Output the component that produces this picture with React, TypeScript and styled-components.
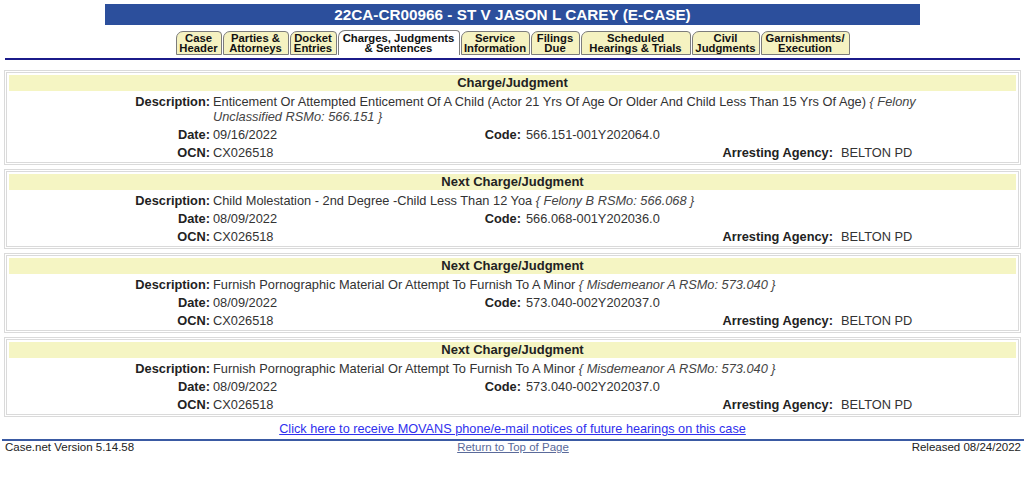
import React from 'react';
import styled, { createGlobalStyle } from 'styled-components';

interface Charge {
  title: string;
  description: string;
  classification: string;
  date: string;
  code: string;
  ocn: string;
  agency: string;
}

const charges: Charge[] = [
  {
    title: 'Charge/Judgment',
    description:
      'Enticement Or Attempted Enticement Of A Child (Actor 21 Yrs Of Age Or Older And Child Less Than 15 Yrs Of Age)',
    classification: '{ Felony Unclassified RSMo: 566.151 }',
    date: '09/16/2022',
    code: '566.151-001Y202064.0',
    ocn: 'CX026518',
    agency: 'BELTON PD',
  },
  {
    title: 'Next Charge/Judgment',
    description: 'Child Molestation - 2nd Degree -Child Less Than 12 Yoa',
    classification: '{ Felony B RSMo: 566.068 }',
    date: '08/09/2022',
    code: '566.068-001Y202036.0',
    ocn: 'CX026518',
    agency: 'BELTON PD',
  },
  {
    title: 'Next Charge/Judgment',
    description: 'Furnish Pornographic Material Or Attempt To Furnish To A Minor',
    classification: '{ Misdemeanor A RSMo: 573.040 }',
    date: '08/09/2022',
    code: '573.040-002Y202037.0',
    ocn: 'CX026518',
    agency: 'BELTON PD',
  },
  {
    title: 'Next Charge/Judgment',
    description: 'Furnish Pornographic Material Or Attempt To Furnish To A Minor',
    classification: '{ Misdemeanor A RSMo: 573.040 }',
    date: '08/09/2022',
    code: '573.040-002Y202037.0',
    ocn: 'CX026518',
    agency: 'BELTON PD',
  },
];

// tab labels, widths taken from the reference tab images
const tabs = [
  { lines: ['Case', 'Header'], width: 46 },
  { lines: ['Parties &', 'Attorneys'], width: 66 },
  { lines: ['Docket', 'Entries'], width: 47 },
  { lines: ['Charges, Judgments', '& Sentences'], width: 122, active: true },
  { lines: ['Service', 'Information'], width: 69 },
  { lines: ['Filings', 'Due'], width: 49 },
  { lines: ['Scheduled', 'Hearings & Trials'], width: 110 },
  { lines: ['Civil', 'Judgments'], width: 68 },
  { lines: ['Garnishments/', 'Execution'], width: 89 },
];

export default function App() {
  return (
    <>
      <GlobalStyle />
      <Page>
        <TitleBar>22CA-CR00966 - ST V JASON L CAREY (E-CASE)</TitleBar>
        <TabRow>
          {tabs.map((t) => (
            <Tab key={t.lines[0]} $width={t.width} $active={!!t.active}>
              {t.lines.map((l) => (
                <span key={l}>{l}</span>
              ))}
            </Tab>
          ))}
        </TabRow>
        <NavRule />

        <ChargeList>
          {charges.map((c, i) => (
            <Box key={i}>
              <Inner>
                <Header>{c.title}</Header>

                <Label $col={1}>Description:</Label>
                <Description>
                  {c.description} <Class>{c.classification}</Class>
                </Description>

                <Label $col={1}>Date:</Label>
                <Value $col={2}>{c.date}</Value>
                <Label $col={3} $pad={5}>Code:</Label>
                <Value $col={4}>{c.code}</Value>

                <Label $col={1}>OCN:</Label>
                <Value $col={2}>{c.ocn}</Value>
                <Label $col={5} $pad={8}>Arresting Agency:</Label>
                <Value $col={6}>{c.agency}</Value>
              </Inner>
            </Box>
          ))}
        </ChargeList>

        <NoticeLink href="#">
          Click here to receive MOVANS phone/e-mail notices of future hearings on this case
        </NoticeLink>
        <FooterRule />
        <Footer>
          <span>Case.net Version 5.14.58</span>
          <TopLink href="#">Return to Top of Page</TopLink>
          <Released>Released 08/24/2022</Released>
        </Footer>
      </Page>
    </>
  );
}

const GlobalStyle = createGlobalStyle`
  body {
    margin: 0;
    background: #fff;
    color: #222;
    font-family: "Liberation Sans", Arial, sans-serif;
  }
`;

const Page = styled.div`
  padding: 4px 3px 0 4px;
`;

const TitleBar = styled.div`
  width: 815px;
  height: 21px;
  margin: 0 auto;
  background: #2c4f9c;
  color: #fff;
  font-size: 15.3px;
  font-weight: bold;
  line-height: 21px;
  text-align: center;
`;

const TabRow = styled.div`
  display: flex;
  justify-content: center;
  align-items: flex-end;
  gap: 1px;
  height: 26px;
  margin-top: 4px;
`;

const Tab = styled.div<{ $width: number; $active: boolean }>`
  width: ${(p) => p.$width}px;
  height: ${(p) => (p.$active ? 25 : 24)}px;
  box-sizing: border-box;
  display: flex;
  flex-direction: column;
  justify-content: center;
  align-items: center;
  border: 1px solid #7c7c7c;
  border-bottom: ${(p) => (p.$active ? 'none' : '1px solid #7c7c7c')};
  border-radius: 7px 4px 0 0;
  background: ${(p) => (p.$active ? '#fff' : '#f5f2c1')};
  color: #111;
  font-size: 11.3px;
  font-weight: bold;
  line-height: 10.5px;
  white-space: nowrap;
`;

const NavRule = styled.div`
  height: 2px;
  margin: 3px 1px 0 1px;
  background: #1b1b8a;
`;

const ChargeList = styled.div`
  display: flex;
  flex-direction: column;
  gap: 4px;
  margin-top: 10px;
`;

const Box = styled.div`
  border: 1px solid #dadada;
  padding: 1px;
`;

const Inner = styled.div`
  border: 1px solid #dadada;
  padding: 2px;
  display: grid;
  grid-template-columns: 204px 253px 60px 178px 137px 1fr;
  row-gap: 3px;
  font-size: 12.8px;
  line-height: 15px;
`;

const Header = styled.div`
  grid-column: 1 / -1;
  height: 16px;
  background: #f5f5c3;
  font-size: 13px;
  font-weight: bold;
  line-height: 16px;
  text-align: center;
  color: #222;
`;

const Label = styled.div<{ $col: number; $pad?: number }>`
  grid-column: ${(p) => p.$col};
  padding-right: ${(p) => p.$pad ?? 3}px;
  text-align: right;
  font-weight: bold;
  color: #222;
  white-space: nowrap;
`;

const Value = styled.div<{ $col: number }>`
  grid-column: ${(p) => p.$col};
  color: #333;
  white-space: nowrap;
`;

const Description = styled.div`
  grid-column: 2 / -1;
  padding-right: 57px;
  color: #333;
`;

const Class = styled.em`
  font-style: italic;
  color: #444;
`;

const NoticeLink = styled.a`
  display: block;
  margin-top: 5px;
  text-align: center;
  font-size: 12.7px;
  line-height: 15px;
  color: #3030ee;
  text-decoration: underline;
`;

const FooterRule = styled.div`
  height: 2px;
  margin: 2px -3px 0 -2px;
  background: #3a5aa3;
`;

const Footer = styled.div`
  display: grid;
  grid-template-columns: 1fr auto 1fr;
  padding: 0 0 0 1px;
  font-size: 11.5px;
  line-height: 13px;
  color: #222;
`;

const TopLink = styled.a`
  color: #5a6a9a;
  text-decoration: underline;
`;

const Released = styled.span`
  text-align: right;
`;
